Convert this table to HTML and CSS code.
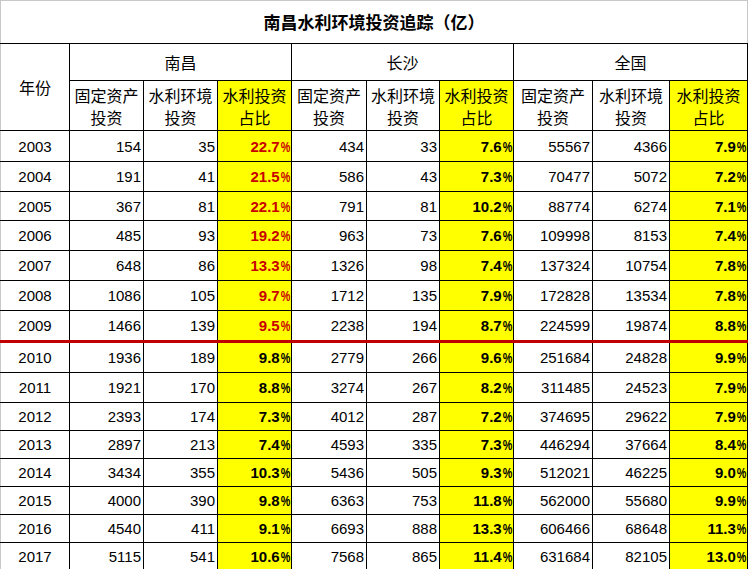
FILE: index.html
```html
<!DOCTYPE html>
<html lang="zh">
<head>
<meta charset="utf-8">
<title>南昌水利环境投资追踪</title>
<link rel="stylesheet" href="styles.css">
</head>
<body>
<table class="sheet">
  <colgroup>
    <col class="w69"><col class="w74"><col class="w74"><col class="w74"><col class="w75"><col class="w73"><col class="w74"><col class="w79"><col class="w77"><col class="w78">
  </colgroup>
  <tr class="title-row"><th colspan="10" class="title">南昌水利环境投资追踪（亿）</th></tr>
  <tr class="region-row">
    <th rowspan="2" class="year-h">年份</th>
    <th colspan="3">南昌</th>
    <th colspan="3">长沙</th>
    <th colspan="3">全国</th>
  </tr>
  <tr class="sub-row">
    <th>固定资产<br>投资</th><th>水利环境<br>投资</th><th class="hl">水利投资<br>占比</th>
    <th>固定资产<br>投资</th><th>水利环境<br>投资</th><th class="hl">水利投资<br>占比</th>
    <th>固定资产<br>投资</th><th>水利环境<br>投资</th><th class="hl">水利投资<br>占比</th>
  </tr>
  <tr class="h31"><td class="yr">2003</td><td>154</td><td>35</td><td class="pc red">22.7<span>%</span></td><td>434</td><td>33</td><td class="pc">7.6<span>%</span></td><td>55567</td><td>4366</td><td class="pc">7.9<span>%</span></td></tr>
  <tr class="h30"><td class="yr">2004</td><td>191</td><td>41</td><td class="pc red">21.5<span>%</span></td><td>586</td><td>43</td><td class="pc">7.3<span>%</span></td><td>70477</td><td>5072</td><td class="pc">7.2<span>%</span></td></tr>
  <tr class="h29"><td class="yr">2005</td><td>367</td><td>81</td><td class="pc red">22.1<span>%</span></td><td>791</td><td>81</td><td class="pc">10.2<span>%</span></td><td>88774</td><td>6274</td><td class="pc">7.1<span>%</span></td></tr>
  <tr class="h30"><td class="yr">2006</td><td>485</td><td>93</td><td class="pc red">19.2<span>%</span></td><td>963</td><td>73</td><td class="pc">7.6<span>%</span></td><td>109998</td><td>8153</td><td class="pc">7.4<span>%</span></td></tr>
  <tr class="h30"><td class="yr">2007</td><td>648</td><td>86</td><td class="pc red">13.3<span>%</span></td><td>1326</td><td>98</td><td class="pc">7.4<span>%</span></td><td>137324</td><td>10754</td><td class="pc">7.8<span>%</span></td></tr>
  <tr class="h30"><td class="yr">2008</td><td>1086</td><td>105</td><td class="pc red">9.7<span>%</span></td><td>1712</td><td>135</td><td class="pc">7.9<span>%</span></td><td>172828</td><td>13534</td><td class="pc">7.8<span>%</span></td></tr>
  <tr class="h30"><td class="yr">2009</td><td>1466</td><td>139</td><td class="pc red">9.5<span>%</span></td><td>2238</td><td>194</td><td class="pc">8.7<span>%</span></td><td>224599</td><td>19874</td><td class="pc">8.8<span>%</span></td></tr>
  <tr class="h30 split"><td class="yr">2010</td><td>1936</td><td>189</td><td class="pc">9.8<span>%</span></td><td>2779</td><td>266</td><td class="pc">9.6<span>%</span></td><td>251684</td><td>24828</td><td class="pc">9.9<span>%</span></td></tr>
  <tr class="h30"><td class="yr">2011</td><td>1921</td><td>170</td><td class="pc">8.8<span>%</span></td><td>3274</td><td>267</td><td class="pc">8.2<span>%</span></td><td>311485</td><td>24523</td><td class="pc">7.9<span>%</span></td></tr>
  <tr class="h28"><td class="yr">2012</td><td>2393</td><td>174</td><td class="pc">7.3<span>%</span></td><td>4012</td><td>287</td><td class="pc">7.2<span>%</span></td><td>374695</td><td>29622</td><td class="pc">7.9<span>%</span></td></tr>
  <tr class="h28"><td class="yr">2013</td><td>2897</td><td>213</td><td class="pc">7.4<span>%</span></td><td>4593</td><td>335</td><td class="pc">7.3<span>%</span></td><td>446294</td><td>37664</td><td class="pc">8.4<span>%</span></td></tr>
  <tr class="h28"><td class="yr">2014</td><td>3434</td><td>355</td><td class="pc">10.3<span>%</span></td><td>5436</td><td>505</td><td class="pc">9.3<span>%</span></td><td>512021</td><td>46225</td><td class="pc">9.0<span>%</span></td></tr>
  <tr class="h28"><td class="yr">2015</td><td>4000</td><td>390</td><td class="pc">9.8<span>%</span></td><td>6363</td><td>753</td><td class="pc">11.8<span>%</span></td><td>562000</td><td>55680</td><td class="pc">9.9<span>%</span></td></tr>
  <tr class="h28"><td class="yr">2016</td><td>4540</td><td>411</td><td class="pc">9.1<span>%</span></td><td>6693</td><td>888</td><td class="pc">13.3<span>%</span></td><td>606466</td><td>68648</td><td class="pc">11.3<span>%</span></td></tr>
  <tr class="h27"><td class="yr">2017</td><td>5115</td><td>541</td><td class="pc">10.6<span>%</span></td><td>7568</td><td>865</td><td class="pc">11.4<span>%</span></td><td>631684</td><td>82105</td><td class="pc">13.0<span>%</span></td></tr>
</table>
</body>
</html>
```
FILE: styles.css
```css
html, body {
  margin: 0;
  padding: 0;
  background: #ffffff;
}

.sheet {
  width: 748px;
  table-layout: fixed;
  border-collapse: collapse;
  font-family: "Liberation Sans", Arial, sans-serif;
  font-size: 15px;
  color: #000;
}

.w69 { width: 69px; }
.w73 { width: 73px; }
.w74 { width: 74px; }
.w75 { width: 75px; }
.w77 { width: 77px; }
.w78 { width: 78px; }
.w79 { width: 79px; }

.sheet th,
.sheet td {
  border: 1px solid #000;
  padding: 0;
  overflow: hidden;
  white-space: nowrap;
}

.sheet th {
  font-family: "Noto Sans CJK SC", "Liberation Sans", sans-serif;
  font-weight: normal;
  font-size: 16px;
  text-align: center;
  vertical-align: middle;
  line-height: 22px;
}

.sheet .title {
  height: 42px;
  font-size: 17px;
  font-weight: bold;
  border-top: 1px solid #c8c8c8;
  border-left: 1px solid #c8c8c8;
  border-right: 1px solid #c8c8c8;
}

.region-row th {
  height: 36px;
}

.sub-row th {
  height: 49px;
}

.sheet .year-h {
  border-left: 1px solid #c8c8c8;
}

.sheet .hl,
.sheet .pc {
  background: #ffff00;
}

.sheet td {
  text-align: right;
  padding-right: 2px;
  vertical-align: middle;
}

.sheet td.yr {
  text-align: center;
  padding-right: 0;
  border-left: 1px solid #c8c8c8;
}

.sheet td.pc {
  font-weight: bold;
  padding-right: 1px;
}

.sheet td.pc span {
  display: inline-block;
  transform: scaleX(0.72);
  transform-origin: right center;
  margin-left: -3px;
}

.sheet td.red {
  color: #c80000;
}

.h31 td { height: 30px; }
.h30 td { height: 29px; }
.h29 td { height: 28px; }
.h28 td { height: 27px; }
.h27 td { height: 26px; }

.split td {
  border-top: 3px solid #c00000;
}
```
